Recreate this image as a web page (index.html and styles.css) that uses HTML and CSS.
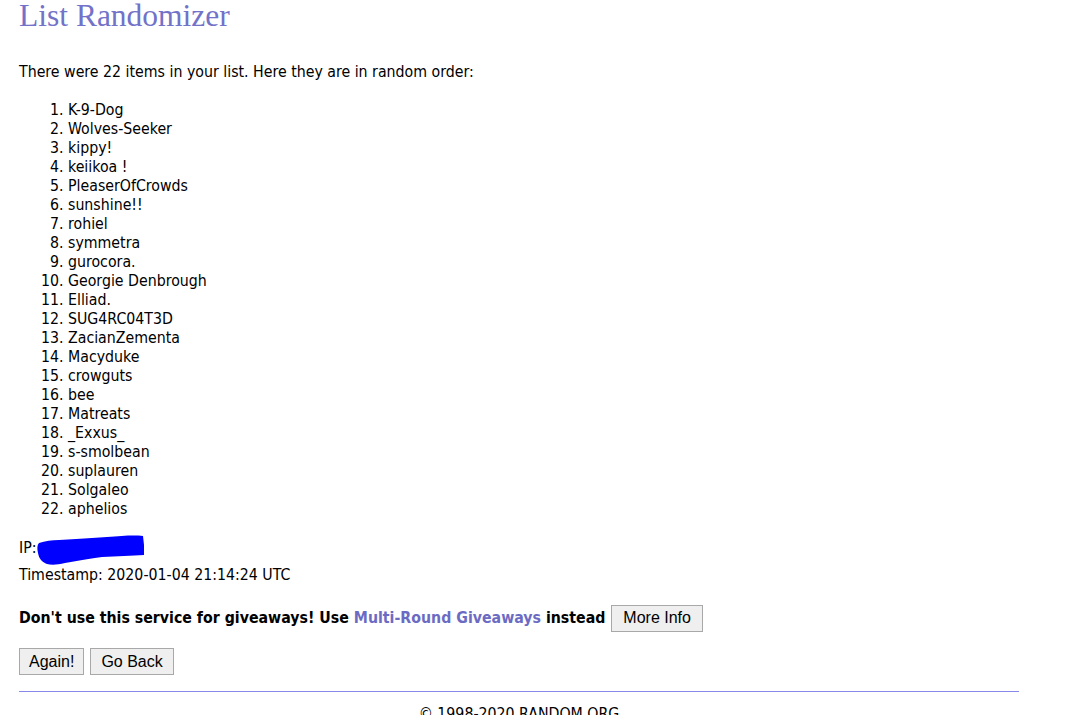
FILE: index.html
```html
<!DOCTYPE html>
<html>
<head>
<meta charset="utf-8">
<link rel="stylesheet" href="styles.css">
</head>
<body>
<div class="page">
  <h1 class="title">List Randomizer</h1>
  <p class="intro">There were 22 items in your list. Here they are in random order:</p>
  <ol class="items">
    <li>K-9-Dog</li>
    <li>Wolves-Seeker</li>
    <li>kippy!</li>
    <li>keiikoa !</li>
    <li>PleaserOfCrowds</li>
    <li>sunshine!!</li>
    <li>rohiel</li>
    <li>symmetra</li>
    <li>gurocora.</li>
    <li>Georgie Denbrough</li>
    <li>Elliad.</li>
    <li>SUG4RC04T3D</li>
    <li>ZacianZementa</li>
    <li>Macyduke</li>
    <li>crowguts</li>
    <li>bee</li>
    <li>Matreats</li>
    <li>_Exxus_</li>
    <li>s-smolbean</li>
    <li>suplauren</li>
    <li>Solgaleo</li>
    <li>aphelios</li>
  </ol>
  <div class="meta">
    <div class="meta-line">IP:<svg class="scribble" width="108" height="32" viewBox="0 0 108 32"><path d="M2 8 C8 6 15 5 22 5 C40 4 55 3 70 2 C85 1 96 0 106 1 L107 10 L107 20 C95 21 80 21 65 22 C50 24 40 26 28 28 C20 30 14 30 10 29 C5 27 2 24 1 18 C0 14 0 10 2 8 Z" fill="#0000ff"/></svg></div>
    <div class="meta-line">Timestamp: 2020-01-04 21:14:24 UTC</div>
  </div>
  <p class="warn">Don't use this service for giveaways! Use <a class="link" href="#">Multi-Round Giveaways</a> instead <button class="btn btn-info">More Info</button></p>
  <div class="actions">
    <button class="btn">Again!</button>
    <button class="btn btn-back">Go Back</button>
  </div>
  <hr class="rule">
  <p class="footer">© 1998-2020 RANDOM.ORG</p>
</div>
</body>
</html>
```
FILE: styles.css
```css
html, body {
  margin: 0;
  padding: 0;
  background: #ffffff;
}
body {
  font-family: "DejaVu Sans Condensed", "DejaVu Sans", sans-serif;
  font-size: 15.75px;
  color: #000000;
}
.page {
  width: 1000px;
  margin-left: 19px;
}
.title {
  font-family: "Liberation Serif", "Times New Roman", serif;
  font-weight: normal;
  font-size: 31.5px;
  color: #7272c8;
  margin: 0;
  line-height: 32px;
}
.intro {
  margin: 30px 0 0 0;
  line-height: 19px;
}
.items {
  margin: 19px 0 0 0;
  padding-left: 49px;
  line-height: 19px;
}
.meta {
  margin: 16px 0 0 0;
}
.meta-line {
  line-height: 27px;
  height: 27px;
}
.scribble {
  vertical-align: -6px;
  margin: -8px 0;
}
.warn {
  font-weight: bold;
  margin: 16px 0 0 0;
  line-height: 28px;
}
.link {
  color: #6b6bc4;
  text-decoration: none;
}
.btn {
  font-family: "Liberation Sans", Arial, sans-serif;
  font-size: 16px;
  font-weight: normal;
  color: #000;
  background: #efefef;
  border: 1px solid #a8a8a8;
  border-radius: 0;
  padding: 3px 9px;
  height: 27px;
  margin: 0;
}
.btn-info {
  padding: 3px 11px;
  margin-left: 1px;
}
.btn-back {
  padding: 3px 10px;
}
.actions {
  margin-top: 16px;
  display: flex;
  gap: 6px;
}
.rule {
  margin: 16px 0 0 0;
  border: 0;
  border-top: 1px solid #8888e8;
  height: 0;
}
.footer {
  text-align: center;
  margin: 12px 0 0 0;
  line-height: 19px;
}
```
